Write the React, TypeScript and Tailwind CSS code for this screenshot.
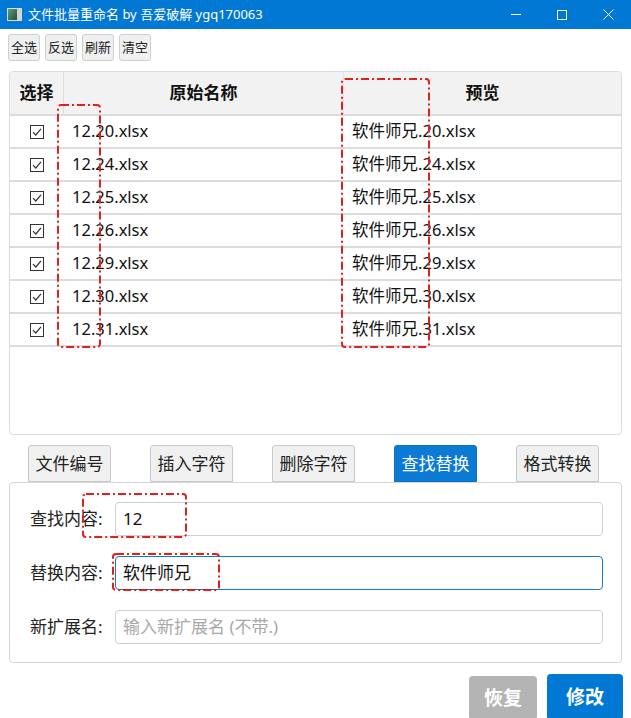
const files = ["20", "24", "25", "26", "29", "30", "31"];

const font = { fontFamily: '"Noto Sans", "Noto Sans CJK SC", sans-serif' };

function Check() {
  return (
    <svg width="14" height="14" viewBox="0 0 14 14" className="block">
      <rect x="0.5" y="0.5" width="13" height="13" fill="white" stroke="#333" />
      <path d="M3 7.2 L5.8 10 L11 3.8" fill="none" stroke="#333" strokeWidth="1.2" />
    </svg>
  );
}

// red dash-dot marker drawn over the content
function Mark({ className }: { className: string }) {
  return (
    <svg className={`absolute pointer-events-none overflow-visible ${className}`}>
      <rect
        x="1"
        y="1"
        width="calc(100% - 2px)"
        height="calc(100% - 2px)"
        rx="3"
        fill="none"
        stroke="#e0201a"
        strokeWidth="2"
        strokeDasharray="8 3 2 3"
      />
    </svg>
  );
}

function ToolBtn({ label }: { label: string }) {
  return (
    <button className="h-[27px] w-[32px] rounded-[3px] border border-[#cfcfcf] bg-[#f0f0f0] text-[13px] leading-none text-[#222]">
      {label}
    </button>
  );
}

function Tab({ label, active }: { label: string; active?: boolean }) {
  return (
    <div
      className={
        active
          ? "flex h-[37px] w-[83px] items-center justify-center rounded-t-[3px] border border-[#0a72c4] bg-[#0a7ad4] text-[17px] text-white"
          : "flex h-[37px] w-[83px] items-center justify-center rounded-t-[3px] border border-[#c9c9c9] bg-[#f0f0f0] text-[17px] text-[#222]"
      }
    >
      {label}
    </div>
  );
}

function Field({ label, value, placeholder, focus }: { label: string; value?: string; placeholder?: string; focus?: boolean }) {
  return (
    <div className="flex items-center">
      <div className="w-[105px] shrink-0 whitespace-nowrap pl-[20px] text-[17px] text-[#222]">{label}</div>
      <div
        className={
          focus
            ? "flex h-[34px] w-[488px] items-center rounded-[4px] border border-[#0a7ad4] bg-white px-[7px] text-[17px] text-[#111]"
            : "flex h-[34px] w-[488px] items-center rounded-[4px] border border-[#d0d0d0] bg-white px-[7px] text-[17px] text-[#111]"
        }
      >
        {value ? value : <span className="text-[#a8a8a8]">{placeholder}</span>}
      </div>
    </div>
  );
}

export default function App() {
  return (
    <div className="relative h-[718px] w-[631px] overflow-hidden bg-white" style={font}>
      {/* title bar */}
      <div className="flex h-[29px] items-center bg-[#0078d4] text-white">
        <div className="ml-[7px] mr-[6px] flex h-[13px] w-[15px] border border-[#d8d8d8] bg-[#2f6b4a]">
          <div className="w-[9px] bg-gradient-to-br from-[#5fa07a] to-[#254d3a]" />
          <div className="flex-1 bg-[#cfd6d2]" />
        </div>
        <div className="text-[13px] leading-none">文件批量重命名 by 吾爱破解 ygq170063</div>
        <div className="ml-auto flex h-full items-center">
          <div className="flex w-[46px] justify-center">
            <div className="h-px w-[10px] bg-white" />
          </div>
          <div className="flex w-[46px] justify-center">
            <div className="h-[10px] w-[10px] border border-white" />
          </div>
          <div className="flex w-[46px] justify-center">
            <svg width="11" height="11" viewBox="0 0 11 11">
              <path d="M0.5 0.5 L10.5 10.5 M10.5 0.5 L0.5 10.5" stroke="white" strokeWidth="1" />
            </svg>
          </div>
        </div>
      </div>

      {/* toolbar */}
      <div className="flex gap-[5px] px-[8px] pt-[5px]">
        <ToolBtn label="全选" />
        <ToolBtn label="反选" />
        <ToolBtn label="刷新" />
        <ToolBtn label="清空" />
      </div>

      {/* table */}
      <div className="mx-[9px] mt-[10px] h-[364px] overflow-hidden rounded-[4px] border border-[#dcdcdc] bg-white">
        <div className="flex h-[44px] border-b-2 border-[#dcdcdc] bg-[#f2f2f2] text-[17px] font-bold text-[#111]">
          <div className="flex w-[54px] items-center justify-center border-r border-[#dcdcdc]">选择</div>
          <div className="flex w-[280px] items-center justify-center border-r border-[#e4e4e4]">原始名称</div>
          <div className="flex flex-1 items-center justify-center">预览</div>
        </div>
        {files.map((f) => (
          <div key={f} className="flex h-[33px] items-center border-b-2 border-[#dcdcdc] text-[16.5px] text-[#111]">
            <div className="flex w-[54px] justify-center">
              <Check />
            </div>
            <div className="w-[280px] pl-[8px]">12.{f}.xlsx</div>
            <div className="flex-1 pl-[8px]">软件师兄.{f}.xlsx</div>
          </div>
        ))}
      </div>

      {/* tabs */}
      <div className="mt-[10px] flex gap-[39px] pl-[28px]">
        <Tab label="文件编号" />
        <Tab label="插入字符" />
        <Tab label="删除字符" />
        <Tab label="查找替换" active />
        <Tab label="格式转换" />
      </div>

      {/* panel */}
      <div className="mx-[9px] flex h-[181px] flex-col gap-[20px] rounded-[4px] border border-[#d6d6d6] bg-white pt-[19px]">
        <Field label="查找内容:" value="12" />
        <Field label="替换内容:" value="软件师兄" focus />
        <Field label="新扩展名:" placeholder="输入新扩展名 (不带.)" />
      </div>

      {/* actions */}
      <div className="mt-[11px] flex justify-end gap-[10px] pr-[8px]">
        <button className="mt-[2px] h-[44px] w-[68px] rounded-[4px] bg-[#b4b4b4] text-[19px] font-bold text-white">恢复</button>
        <button className="h-[46px] w-[76px] rounded-[4px] bg-[#0078d4] text-[19px] font-bold text-white">修改</button>
      </div>

      <Mark className="left-[57px] top-[104px] h-[244px] w-[44px]" />
      <Mark className="left-[341px] top-[78px] h-[270px] w-[89px]" />
      <Mark className="left-[82px] top-[493px] h-[45px] w-[105px]" />
      <Mark className="left-[112px] top-[553px] h-[38px] w-[108px]" />
    </div>
  );
}
